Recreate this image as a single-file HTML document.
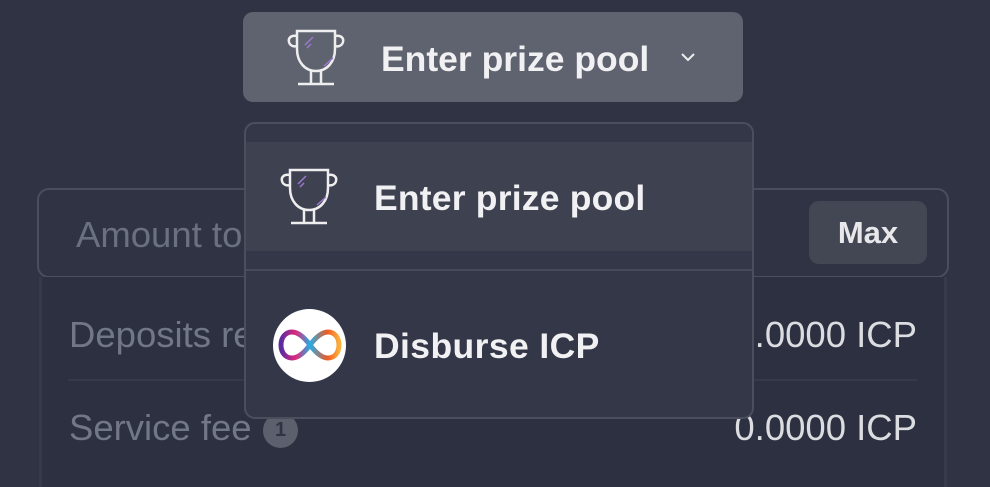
<!DOCTYPE html>
<html><head><style>
*{margin:0;padding:0;box-sizing:border-box}
body{width:990px;height:478px;overflow:hidden;background:#2f3344;font-family:"Liberation Sans",sans-serif;position:relative}
.abs{position:absolute}
.btn{left:243px;top:12px;width:500px;height:90px;background:#5f636f;border-radius:10px}
.t{color:#f1f1f3;font-weight:bold;font-size:35.5px;white-space:nowrap}
.input{left:37px;top:188px;width:912px;height:90px;border:2px solid #4a4e5c;border-radius:12px}
.panel{left:39px;top:277px;width:908px;height:210px;background:#2c3041;border-left:3px solid #363a4a;border-right:3px solid #363a4a}
.lbl{color:#727788;font-size:36.5px;white-space:nowrap}
.val{color:#dcdde1;font-size:36.5px;white-space:nowrap;right:73px}
.dd{left:244px;top:122px;width:510px;height:297px;background:#333748;border:2px solid #4b4f5d;border-radius:11px;overflow:hidden}
</style></head><body>
<div class="abs btn"></div>
<svg class="abs" style="left:286px;top:28px" width="60" height="58" viewBox="0 0 60 58" fill="none" stroke="#eee" stroke-width="2.5">
<path d="M11 3h38v18c0 13-8 22-19 22S11 34 11 21z"/><path d="M11 8C5 7 2 10 3 14c1 4 5 5 8 4"/><path d="M49 8c6-1 9 2 8 6-1 4-5 5-8 4"/>
<path d="M25 43v12M35 43v12M12 56h36"/><path d="M19 17l8-8M21 20l4-4M38 38l9-8" stroke="#9a7ad0" stroke-width="1.5"/></svg>
<div class="abs t" style="left:381px;top:38px;line-height:42px">Enter prize pool</div>
<svg class="abs" style="left:680px;top:51px" width="16" height="12" viewBox="0 0 16 12" fill="none" stroke="#eee" stroke-width="2"><path d="M2 3l6 6 6-6"/></svg>

<div class="abs input"></div>
<div class="abs lbl" style="left:76px;top:214px;line-height:42px;color:#6b7081">Amount to</div>
<div class="abs" style="left:809px;top:201px;width:118px;height:63px;background:#434754;border-radius:10px;color:#e8e8eb;font-size:31px;font-weight:bold;text-align:center;line-height:63px">Max</div>
<div class="abs panel"></div>
<div class="abs lbl" style="left:69px;top:314px;line-height:42px">Deposits re</div>
<div class="abs val" style="top:314px;line-height:42px">0.0000 ICP</div>
<div class="abs" style="left:68px;top:379px;width:849px;height:2px;background:#353949"></div>
<div class="abs lbl" style="left:69px;top:407px;line-height:42px">Service fee</div>
<div class="abs" style="left:263px;top:413px;width:35px;height:35px;border-radius:50%;background:#5c606d;color:#2f3344;font-weight:bold;font-size:20px;text-align:center;line-height:35px">1</div>
<div class="abs val" style="top:407px;line-height:42px">0.0000 ICP</div>

<div class="abs dd">
 <div class="abs" style="left:0;top:18px;width:510px;height:109px;background:#3d4150"></div>
 <div class="abs" style="left:0;top:145px;width:510px;height:2px;background:#474b59"></div>
</div>
<svg class="abs" style="left:279px;top:167px" width="60" height="58" viewBox="0 0 60 58" fill="none" stroke="#eee" stroke-width="2.5">
<path d="M11 3h38v18c0 13-8 22-19 22S11 34 11 21z"/><path d="M11 8C5 7 2 10 3 14c1 4 5 5 8 4"/><path d="M49 8c6-1 9 2 8 6-1 4-5 5-8 4"/>
<path d="M25 43v12M35 43v12M12 56h36"/><path d="M19 17l8-8M21 20l4-4M38 38l9-8" stroke="#9a7ad0" stroke-width="1.5"/></svg>
<div class="abs t" style="left:374px;top:177px;line-height:42px;letter-spacing:0.2px">Enter prize pool</div>
<div class="abs" style="left:273px;top:309px;width:73px;height:73px;border-radius:50%;background:#fff"></div>
<svg class="abs" style="left:276px;top:325px" width="68" height="40" viewBox="0 0 68 40" fill="none" stroke-width="5" stroke-linecap="round">
<defs><linearGradient id="a" x1="0" x2="1"><stop offset="0" stop-color="#5a2aa0"/><stop offset=".5" stop-color="#e0287a"/><stop offset="1" stop-color="#29abe2"/></linearGradient>
<linearGradient id="b" x1="0" x2="1"><stop offset="0" stop-color="#29abe2"/><stop offset=".6" stop-color="#f15a24"/><stop offset="1" stop-color="#fbb03b"/></linearGradient></defs>
<path d="M34 20C28 12 22 7 16 7 9 7 5 13 5 20s4 13 11 13c6 0 12-5 18-13" stroke="url(#a)"/>
<path d="M34 20c6 8 12 13 18 13 7 0 11-6 11-13S59 7 52 7c-6 0-12 5-18 13" stroke="url(#b)"/></svg>
<div class="abs t" style="left:374px;top:325px;line-height:42px;letter-spacing:0.4px">Disburse ICP</div>
</body></html>
